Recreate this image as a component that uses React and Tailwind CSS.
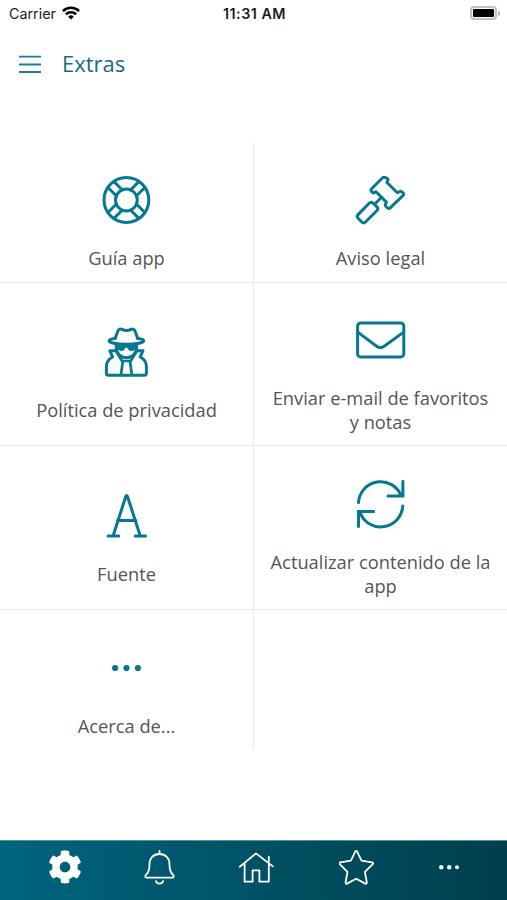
import React from "react";
import { FaCog } from "react-icons/fa";

const stroke = {
  fill: "none",
  stroke: "currentColor",
  strokeWidth: 3,
  strokeLinecap: "round",
  strokeLinejoin: "round",
};

const IconBox = ({ children }) => (
  <svg viewBox="0.6 0 50 50" className="h-[50px] w-[50px] shrink-0 overflow-visible" {...stroke}>
    {children}
  </svg>
);

const LifeRing = () => (
  <IconBox>
    <circle cx="25" cy="25" r="22.4" />
    <circle cx="25" cy="25" r="10.9" />
    {[45, 135, 225, 315].map((angle) => (
      <path
        key={angle}
        d="M34.9 20.8H46.5M34.9 29.2H46.5"
        transform={`rotate(${angle} 25 25)`}
      />
    ))}
  </IconBox>
);

const Gavel = () => (
  <IconBox>
    <path d="M27.2 2.8 16 14c-1.4 1.4 1.4 4.6 2.8 3.6l1.800-.9 10.400 10.400-.9 2c-1 1.600 2.600 5.600 4.400 4L47.800 20.400c1.600-1.700-1.800-4.900-3.600-3.800l-2.200 1.200L31.500 7.500l1-2.200c1-1.500-3.700-4.100-5.300-2.500Z" />
    <path d="M26.100 22.300l-5.400 5.400M13.800 28.300 2.700 39.600c-1.100 1.100-1.100 2.600 0 3.700l3.700 3.700c1.100 1.100 2.600 1.100 3.700 0l11.500-11.500c1.100-1.100 1.100-2.500 0-3.600l-3.900-3.700c-1.100-1.100-2.700-1.100-3.900.1Z" />
  </IconBox>
);

const Spy = () => (
  <IconBox>
    <path d="M13.7 11.8 16.3 4.500c.7-2.200 2-3.100 4.200-2.100 3.300 1.600 5.800 1.600 9.100 0 2.200-1 3.500-.1 4.200 2.100l2.600 7.300" />
    <path d="M13.7 11.200c-4 .6-6 1.600-6 2.500 0 2.100 7.600 3.500 17.300 3.500s17.300-1.400 17.300-3.500c0-.9-2-1.900-6-2.500" />
    <path d="M14.9 17.500v3.800c0 5 4.200 9.500 10.100 9.500s10.100-4.500 10.100-9.500v-3.800" />
    <path
      d="M15.900 18h18.200v1.800c0 2.300-1.500 3.900-4 3.900-2.400 0-3.500-1.600-4.100-3.400h-2c-.6 1.800-1.700 3.400-4.100 3.400-2.500 0-4-1.600-4-3.900z"
      fill="currentColor"
      strokeWidth="0.8"
    />
    <path d="M14.500 23.700H8.400l2.800 6.300c-3.900 2-6.200 5-6.200 9.400v6.800c0 1.200.9 2.100 2.100 2.100h35.800c1.200 0 2.100-.9 2.100-2.100v-6.800c0-4.400-2.300-7.400-6.200-9.400l2.800-6.300h-6.100" />
    <path
      d="M14.900 24.500 21.300 35l-1.700 12.500M35.100 24.500 28.700 35l1.700 12.500M21 34h8"
      strokeWidth="2.7"
    />
  </IconBox>
);

const Envelope = () => (
  <IconBox>
    <rect x="2.2" y="7.9" width="46.2" height="34" rx="3" />
    <path d="M2.700 17.400 21.200 31.200c2.500 1.900 5 1.900 7.600 0L47.900 17.400" />
  </IconBox>
);

const FontIcon = () => (
  <IconBox>
    <path d="M11.700 45 24.400 5.300Q25.200 3.500 26 5.300L38.900 45M16 29.500h18.500M6.700 45h10.600M33.800 45H44.200" />
  </IconBox>
);

const Refresh = () => (
  <IconBox>
    <path d="M3.100 24.800A22.100 22.100 0 0 1 45.900 17.100" strokeLinecap="butt" />
    <path d="M47.500 2.300v14.700H32.600" strokeLinejoin="miter" />
    <path d="M47.400 25.800A22.100 22.100 0 0 1 4.500 33.300" strokeLinecap="butt" />
    <path d="M3.100 47.500V32.500h15.200" strokeLinejoin="miter" />
  </IconBox>
);

const Dots = () => (
  <IconBox>
    <g fill="currentColor" stroke="none">
      <circle cx="13.7" cy="25" r="3.1" />
      <circle cx="25.1" cy="25" r="3.1" />
      <circle cx="36.5" cy="25" r="3.1" />
    </g>
  </IconBox>
);

const items = [
  { label: "Guía app", icon: LifeRing },
  { label: "Aviso legal", icon: Gavel },
  { label: "Política de privacidad", icon: Spy },
  { label: "Enviar e-mail de favoritos y notas", icon: Envelope },
  { label: "Fuente", icon: FontIcon },
  { label: "Actualizar contenido de la app", icon: Refresh },
  { label: "Acerca de...", icon: Dots },
  null,
];

const StatusBar = () => (
  <div className="grid h-7 grid-cols-3 items-center pl-[9px] pr-[7px] font-['Inter'] leading-none text-[#1c1c1c]">
    <div className="flex items-center gap-1.5">
      <span className="text-[14.3px]">Carrier</span>
      <svg viewBox="0 0 18 14" className="mb-0.5 h-[14px] w-[18px]" fill="none" stroke="#000" strokeWidth="2.6">
        <path d="M.9 5.1a11.6 11.6 0 0 1 16.2 0M3.9 8.3a7.3 7.3 0 0 1 10.2 0" />
        <path d="M9 13.5 6.2 10.7a4 4 0 0 1 5.6 0z" fill="#000" stroke="none" />
      </svg>
    </div>
    <span className="whitespace-nowrap text-center text-[14.3px] font-semibold tracking-[0.5px]">11:31 AM</span>
    <div className="mb-0.5 flex items-center justify-end gap-px">
      <div className="h-[14px] w-[27px] rounded-[4px] border-2 border-[#c0c0c0] p-px">
        <div className="h-full rounded-[1px] bg-black" />
      </div>
      <div className="h-[5px] w-[2px] rounded-r-full bg-[#b5b5b5]" />
    </div>
  </div>
);

const Footer = () => (
  <footer className="flex h-[60px] items-start justify-between border-t border-[#5d8f9c] bg-linear-to-r from-[#00657e] to-[#003f4c] px-[48px] pt-[9px] text-white">
    <FaCog className="h-[34px] w-[34px]" />
    <svg viewBox="2.4 0 30 35" className="h-[35px] w-[30px] overflow-visible" {...stroke} strokeWidth="1.8">
      <path d="M15.900 1v3M15.900 4C9.700 4 5.900 8.400 5.900 14.400c0 6-1 8.100-3.400 10.300-1.500 1.400-.9 3 .9 3h25c1.800 0 2.400-1.600.9-3-2.400-2.200-3.400-4.300-3.400-10.300C25.900 8.400 22.100 4 15.900 4Z" />
      <path d="M12.300 31.200c.6 3.200 6.600 3.200 7.200 0" />
    </svg>
    <svg viewBox="1.8 0 36 35" className="h-[35px] w-[36px] overflow-visible" {...stroke} strokeWidth="1.8">
      <path d="M1.600 16.800 17.800 3.400 34.600 16.400M30.600 13.300V6.600M6.400 13.200v18.500h8V20.300h6.800v11.400h9.400V13.300" />
    </svg>
    <svg viewBox="0.5 0 36 35" className="h-[35px] w-[36px]" {...stroke} strokeWidth="1.8">
      <path d="M16.600 1.800Q17.700.2 18.800 1.800L23 10.700 33.600 12.300Q35.400 12.700 34.200 14.100L26.400 21.800 28.300 32.300Q28.400 34.300 26.800 33.600L17.700 28.700 8.600 33.600Q7 34.300 7.100 32.300L9 21.800 1.200 14.100Q0 12.700 1.800 12.300L12.400 10.700Z" />
    </svg>
    <svg viewBox="0 0 20 35" className="h-[35px] w-[20px]" fill="currentColor">
      <circle cx="2.3" cy="17.3" r="2.2" />
      <circle cx="10.2" cy="17.3" r="2.2" />
      <circle cx="18" cy="17.3" r="2" />
    </svg>
  </footer>
);

const App = () => {
  return (
    <div className="flex h-[900px] w-[507px] flex-col overflow-hidden bg-white font-['Open_Sans',sans-serif]">
      <StatusBar />

      <header className="flex h-[72px] items-center gap-[21px] pl-[19px] text-[#1b6a80]">
        <svg viewBox="0 0 22 18" className="h-[18px] w-[22px]" fill="none" stroke="#17809a" strokeWidth="1.8">
          <path d="M0 1.7h22M0 9.5h22M0 17h22" />
        </svg>
        <h1 className="mb-0.5 text-[22px] leading-none">Extras</h1>
      </header>

      <main className="mt-[42px] grid grid-cols-[254px_253px] grid-rows-[141px_163px_164px_139px] text-[#555]">
        {items.map((item, i) => (
          <div
            key={i}
            className={`flex flex-col items-center justify-center border-[#e9e9e9] px-4 pt-[33px] pb-[12px] ${
              i % 2 === 0 ? "border-r" : ""
            } ${i < 6 ? "border-b" : ""}`}
          >
            {item && (
              <>
                <span className="text-[#087792]">
                  <item.icon />
                </span>
                <span className="mt-[21px] text-center text-[18.3px] leading-6">{item.label}</span>
              </>
            )}
          </div>
        ))}
      </main>

      <div className="flex-1" />
      <Footer />
    </div>
  );
};

export default App;
